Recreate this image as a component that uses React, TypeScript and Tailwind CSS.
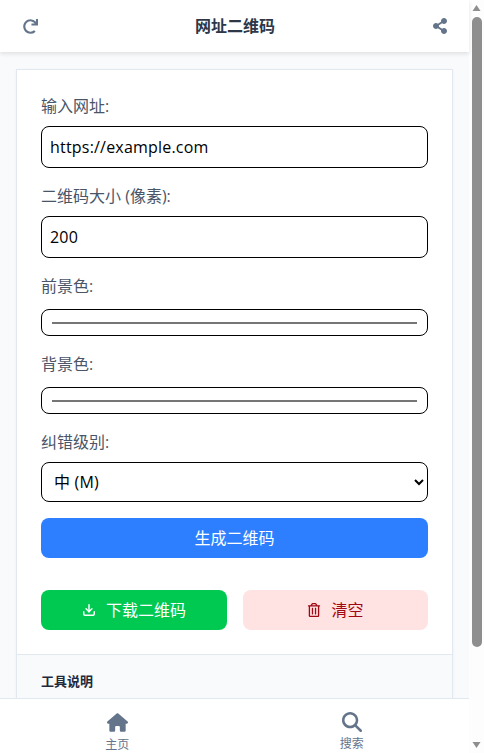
import { FaShareAlt, FaRedo, FaRegTrashAlt } from 'react-icons/fa'
import { FaHouse, FaMagnifyingGlass } from 'react-icons/fa6'
import { LuDownload } from 'react-icons/lu'

const font = '[font-family:"Open_Sans","Noto_Sans_CJK_SC",sans-serif]'

function Label({ children }: { children: React.ReactNode }) {
  return <label className="block mb-2 text-base text-[#4a5568]">{children}</label>
}

// label margin collapses with this one, so 11px gives the 3px the native color input had
function ColorField() {
  return (
    <div className="h-[27px] mt-[11px] mb-4 rounded-lg border border-black bg-white flex items-center px-2.5">
      <div className="h-0.5 w-full bg-[#767676]" />
    </div>
  )
}

export default function App() {
  return (
    <div className={`h-screen flex overflow-hidden bg-[#f8fafc] ${font}`}>
      <div className="w-[469px] flex flex-col">
        <header className="h-[52px] shrink-0 bg-white shadow-[0_2px_4px_rgba(0,0,0,0.1)] flex items-center justify-between pl-[23px] pr-[21px] z-10">
          <FaRedo className="text-[#64748b] text-[15px]" />
          <h1 className="text-base font-semibold text-[#2d3748]">网址二维码</h1>
          <FaShareAlt className="text-[#64748b] text-base" />
        </header>

        <main className="flex-1 overflow-hidden px-4 pt-[17px]">
          <div className="bg-white border border-[#e2e8f0] shadow-[0_1px_3px_rgba(0,0,0,0.05)]">
            <div className="p-6">
              <Label>输入网址:</Label>
              <input
                defaultValue="https://example.com"
                className="block w-full h-[42px] mb-4 px-2 rounded-lg border border-black text-base tracking-[0.2px] text-black"
              />
              <Label>二维码大小 (像素):</Label>
              <input
                defaultValue="200"
                className="block w-full h-[42px] mb-4 px-2 rounded-lg border border-black text-base tracking-[0.2px] text-black"
              />
              <Label>前景色:</Label>
              <ColorField />
              <Label>背景色:</Label>
              <ColorField />
              <Label>纠错级别:</Label>
              <select className="block w-full h-10 mb-4 px-2 rounded-lg border border-black text-base tracking-[0.2px] text-black bg-white appearance-auto">
                <option>中 (M)</option>
              </select>
              <button className="block w-full h-10 rounded-lg bg-[#2d7fff] text-white text-base">生成二维码</button>
              <div className="flex gap-4 mt-8">
                <button className="w-[186px] h-10 rounded-lg bg-[#00c951] text-white text-base flex items-center justify-center gap-2.5">
                  <LuDownload className="text-sm" strokeWidth={2.5} />
                  下载二维码
                </button>
                <button className="flex-1 h-10 rounded-lg bg-[#ffe2e2] text-[#9f0712] text-base flex items-center justify-center gap-2.5">
                  <FaRegTrashAlt className="text-sm" />
                  清空
                </button>
              </div>
            </div>
            <div className="border-t border-[#e2e8f0] bg-[#f8fafc] px-6 pt-[17px] h-24">
              <h3 className="text-[13px] font-bold text-[#1e293b]">工具说明</h3>
            </div>
          </div>
        </main>

        <nav className="h-[55px] shrink-0 bg-white border-t border-[#e2e8f0] flex z-10">
          <div className="flex-1 flex flex-col items-center pt-[13px] gap-1 text-[#64748b]">
            <FaHouse className="text-[21px]" />
            <span className="text-xs">主页</span>
          </div>
          <div className="flex-1 flex flex-col items-center pt-[13px] gap-1 text-[#64748b]">
            <FaMagnifyingGlass className="text-[20px]" />
            <span className="text-xs">搜索</span>
          </div>
        </nav>
      </div>

      <div className="w-[15px] shrink-0 bg-[#fdfdfd] flex flex-col items-center">
        <svg width="15" height="17" viewBox="0 0 15 17" className="shrink-0"><path d="M3.5 11 L7.5 5 L11.5 11 Z" fill="#8e8e8e" /></svg>
        <div className="w-[10px] h-[630px] rounded-full bg-[#8e8e8e] shrink-0" />
        <div className="flex-1" />
        <svg width="15" height="17" viewBox="0 0 15 17" className="shrink-0"><path d="M3.5 6 L7.5 12 L11.5 6 Z" fill="#8e8e8e" /></svg>
      </div>
    </div>
  )
}
